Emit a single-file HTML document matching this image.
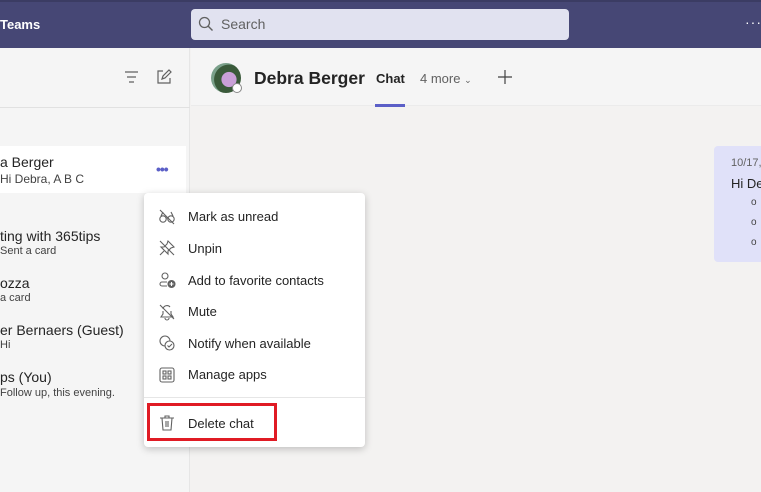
<!DOCTYPE html>
<html><head><meta charset="utf-8"><style>
*{margin:0;padding:0;box-sizing:border-box}
body{width:761px;height:492px;overflow:hidden;background:#f3f2f1;font-family:"Liberation Sans",sans-serif;position:relative;color:#242424}
.abs{position:absolute}
.top{left:0;top:0;width:761px;height:48px;background:#464775;border-top:2px solid #3b3c63}
.search{left:191px;top:9px;width:378px;height:31px;background:#e1e2f0;border-radius:4px;color:#616161;font-size:14px;line-height:31px;padding-left:30px}
.left{left:0;top:48px;width:190px;height:444px;background:#f5f5f5;border-right:1px solid #e6e6e6}
.hdr{left:191px;top:48px;width:570px;height:58px;background:#f5f5f5;border-bottom:1px solid #ebebeb}
.t{font-size:13px;color:#242424;white-space:nowrap}
.s{font-size:11px;color:#424242;white-space:nowrap}
.menu{left:144px;top:193px;width:221px;height:254px;background:#fff;border-radius:4px;box-shadow:0 2px 8px rgba(0,0,0,.22)}
.mi{position:absolute;left:44px;font-size:13px;color:#242424}
.ic{position:absolute;left:14px;width:18px;height:18px}
</style></head><body>
<div class="abs top"></div>
<div class="abs" style="left:0;top:17px;color:#fff;font-weight:bold;font-size:13px">Teams</div>
<div class="abs search">Search</div>
<svg class="abs" style="left:198px;top:16px" width="16" height="16" viewBox="0 0 16 16"><circle cx="6.5" cy="6.5" r="5" fill="none" stroke="#616161" stroke-width="1.3"/><path d="M10 10L14.5 14.5" stroke="#616161" stroke-width="1.4"/></svg>
<div class="abs" style="left:745px;top:14px;color:#fff;font-size:14px;letter-spacing:1px">···</div>
<div class="abs left"></div>
<div class="abs" style="left:0;top:107px;width:190px;height:1px;background:#e1e1e1"></div>
<svg class="abs" style="left:124px;top:70px" width="16" height="14"><path d="M1 2h13M3 7h9M5 12h5" stroke="#616161" stroke-width="1.2"/></svg>
<svg class="abs" style="left:156px;top:69px" width="16" height="16"><path d="M7 2H2v12h12V9M6 10l1-3 6-6 2 2-6 6z" fill="none" stroke="#616161" stroke-width="1.2"/></svg>
<div class="abs" style="left:0;top:146px;width:186px;height:47px;background:#fff"></div>
<div class="abs t" style="left:0;top:154px;font-size:14px">a Berger</div>
<div class="abs s" style="left:0;top:172px;font-size:12px">Hi Debra, A B C</div>
<div class="abs" style="left:156px;top:161px;color:#5b5fc7;font-size:14px;font-weight:bold;letter-spacing:-1px">•••</div>
<div class="abs t" style="left:0;top:228px;font-size:14px">ting with 365tips</div>
<div class="abs s" style="left:0;top:245px">Sent a card</div>
<div class="abs t" style="left:0;top:275px;font-size:14px">ozza</div>
<div class="abs s" style="left:0;top:292px">a card</div>
<div class="abs t" style="left:0;top:322px;font-size:14px">er Bernaers (Guest)</div>
<div class="abs s" style="left:0;top:339px">Hi</div>
<div class="abs t" style="left:0;top:369px;font-size:14px">ps (You)</div>
<div class="abs s" style="left:0;top:387px">Follow up, this evening.</div>
<div class="abs hdr"></div>
<div class="abs" style="left:211px;top:63px;width:30px;height:30px;border-radius:50%;background:radial-gradient(circle at 60% 55%,#c9a0d8 0 30%,#3a5a3a 32% 60%,#7aa08a 62%)"></div>
<div class="abs" style="left:232px;top:83px;width:10px;height:10px;border-radius:50%;background:#fff;border:1px solid #888"></div>
<div class="abs" style="left:254px;top:68px;font-size:17.5px;font-weight:bold">Debra Berger</div>
<div class="abs" style="left:376px;top:71px;font-size:13px;font-weight:bold">Chat</div>
<div class="abs" style="left:375px;top:104px;width:30px;height:3px;background:#5b5fc7"></div>
<div class="abs" style="left:420px;top:71px;font-size:13px;color:#616161">4 more <span style="font-size:9px">⌄</span></div>
<svg class="abs" style="left:497px;top:69px" width="16" height="16"><path d="M8 1v14M1 8h14" stroke="#424242" stroke-width="1.2"/></svg>
<div class="abs" style="left:714px;top:146px;width:60px;height:116px;background:#e0e1f9;border-radius:4px"></div>
<div class="abs" style="left:731px;top:157px;font-size:11px;color:#616161;white-space:nowrap">10/17,</div>
<div class="abs" style="left:731px;top:176px;font-size:13px;white-space:nowrap">Hi De</div>
<div class="abs" style="left:751px;top:193px;font-size:10px;line-height:20px;color:#424242">o<br>o<br>o</div>
<div class="abs menu">
<svg class="ic" style="top:15px" viewBox="0 0 18 18" fill="none" stroke="#616161" stroke-width="1.1"><circle cx="5" cy="11" r="3.2"/><circle cx="13" cy="11" r="3.2"/><path d="M8 10h2M2 2l14 14M3 8l2-4M15 8l-2-4"/></svg>
<div class="mi" style="top:16px">Mark as unread</div>
<svg class="ic" style="top:46px" viewBox="0 0 18 18" fill="none" stroke="#616161" stroke-width="1.1"><path d="M2 2l14 14M10 2l6 6-3 1-3 3 0 3-7-7 3 0 3-3zM6 12l-4 4"/></svg>
<div class="mi" style="top:48px">Unpin</div>
<svg class="ic" style="top:78px" viewBox="0 0 18 18" fill="none" stroke="#616161" stroke-width="1.1"><circle cx="7" cy="5" r="3"/><path d="M9 11H4a2 2 0 0 0 0 4h5"/><circle cx="13.5" cy="13" r="3.5" fill="#616161"/><path d="M13.5 11v4M11.5 13h4" stroke="#fff"/></svg>
<div class="mi" style="top:80px">Add to favorite contacts</div>
<svg class="ic" style="top:110px" viewBox="0 0 18 18" fill="none" stroke="#616161" stroke-width="1.1"><path d="M2 2l14 14M5 6a4 4 0 0 1 7-2M13 8v3l2 3H3l2-3V8M7 15a2 2 0 0 0 4 0"/></svg>
<div class="mi" style="top:111px">Mute</div>
<svg class="ic" style="top:141px" viewBox="0 0 18 18" fill="none" stroke="#616161" stroke-width="1.1"><circle cx="7" cy="7" r="5"/><circle cx="11.5" cy="11.5" r="4.5" fill="#fff"/><path d="M9.5 11.5l1.5 1.5 3-3"/></svg>
<div class="mi" style="top:143px">Notify when available</div>
<svg class="ic" style="top:173px" viewBox="0 0 18 18" fill="none" stroke="#616161" stroke-width="1.1"><rect x="2" y="2" width="14" height="14" rx="2"/><rect x="5" y="5" width="3" height="3"/><rect x="10" y="5" width="3" height="3"/><rect x="5" y="10" width="3" height="3"/><rect x="10" y="10" width="3" height="3"/></svg>
<div class="mi" style="top:174px">Manage apps</div>
<div style="position:absolute;left:0;top:204px;width:221px;height:1px;background:#e6e6e6"></div>
<svg class="ic" style="top:221px" viewBox="0 0 18 18" fill="none" stroke="#616161" stroke-width="1.1"><path d="M2 4h14M7 4V2h4v2M4 4l1 12h8l1-12M8 7v6M10 7v6"/></svg>
<div class="mi" style="top:223px">Delete chat</div>
<div style="position:absolute;left:3px;top:210px;width:130px;height:38px;border:3px solid #e01b24"></div>
</div>
</body></html>
